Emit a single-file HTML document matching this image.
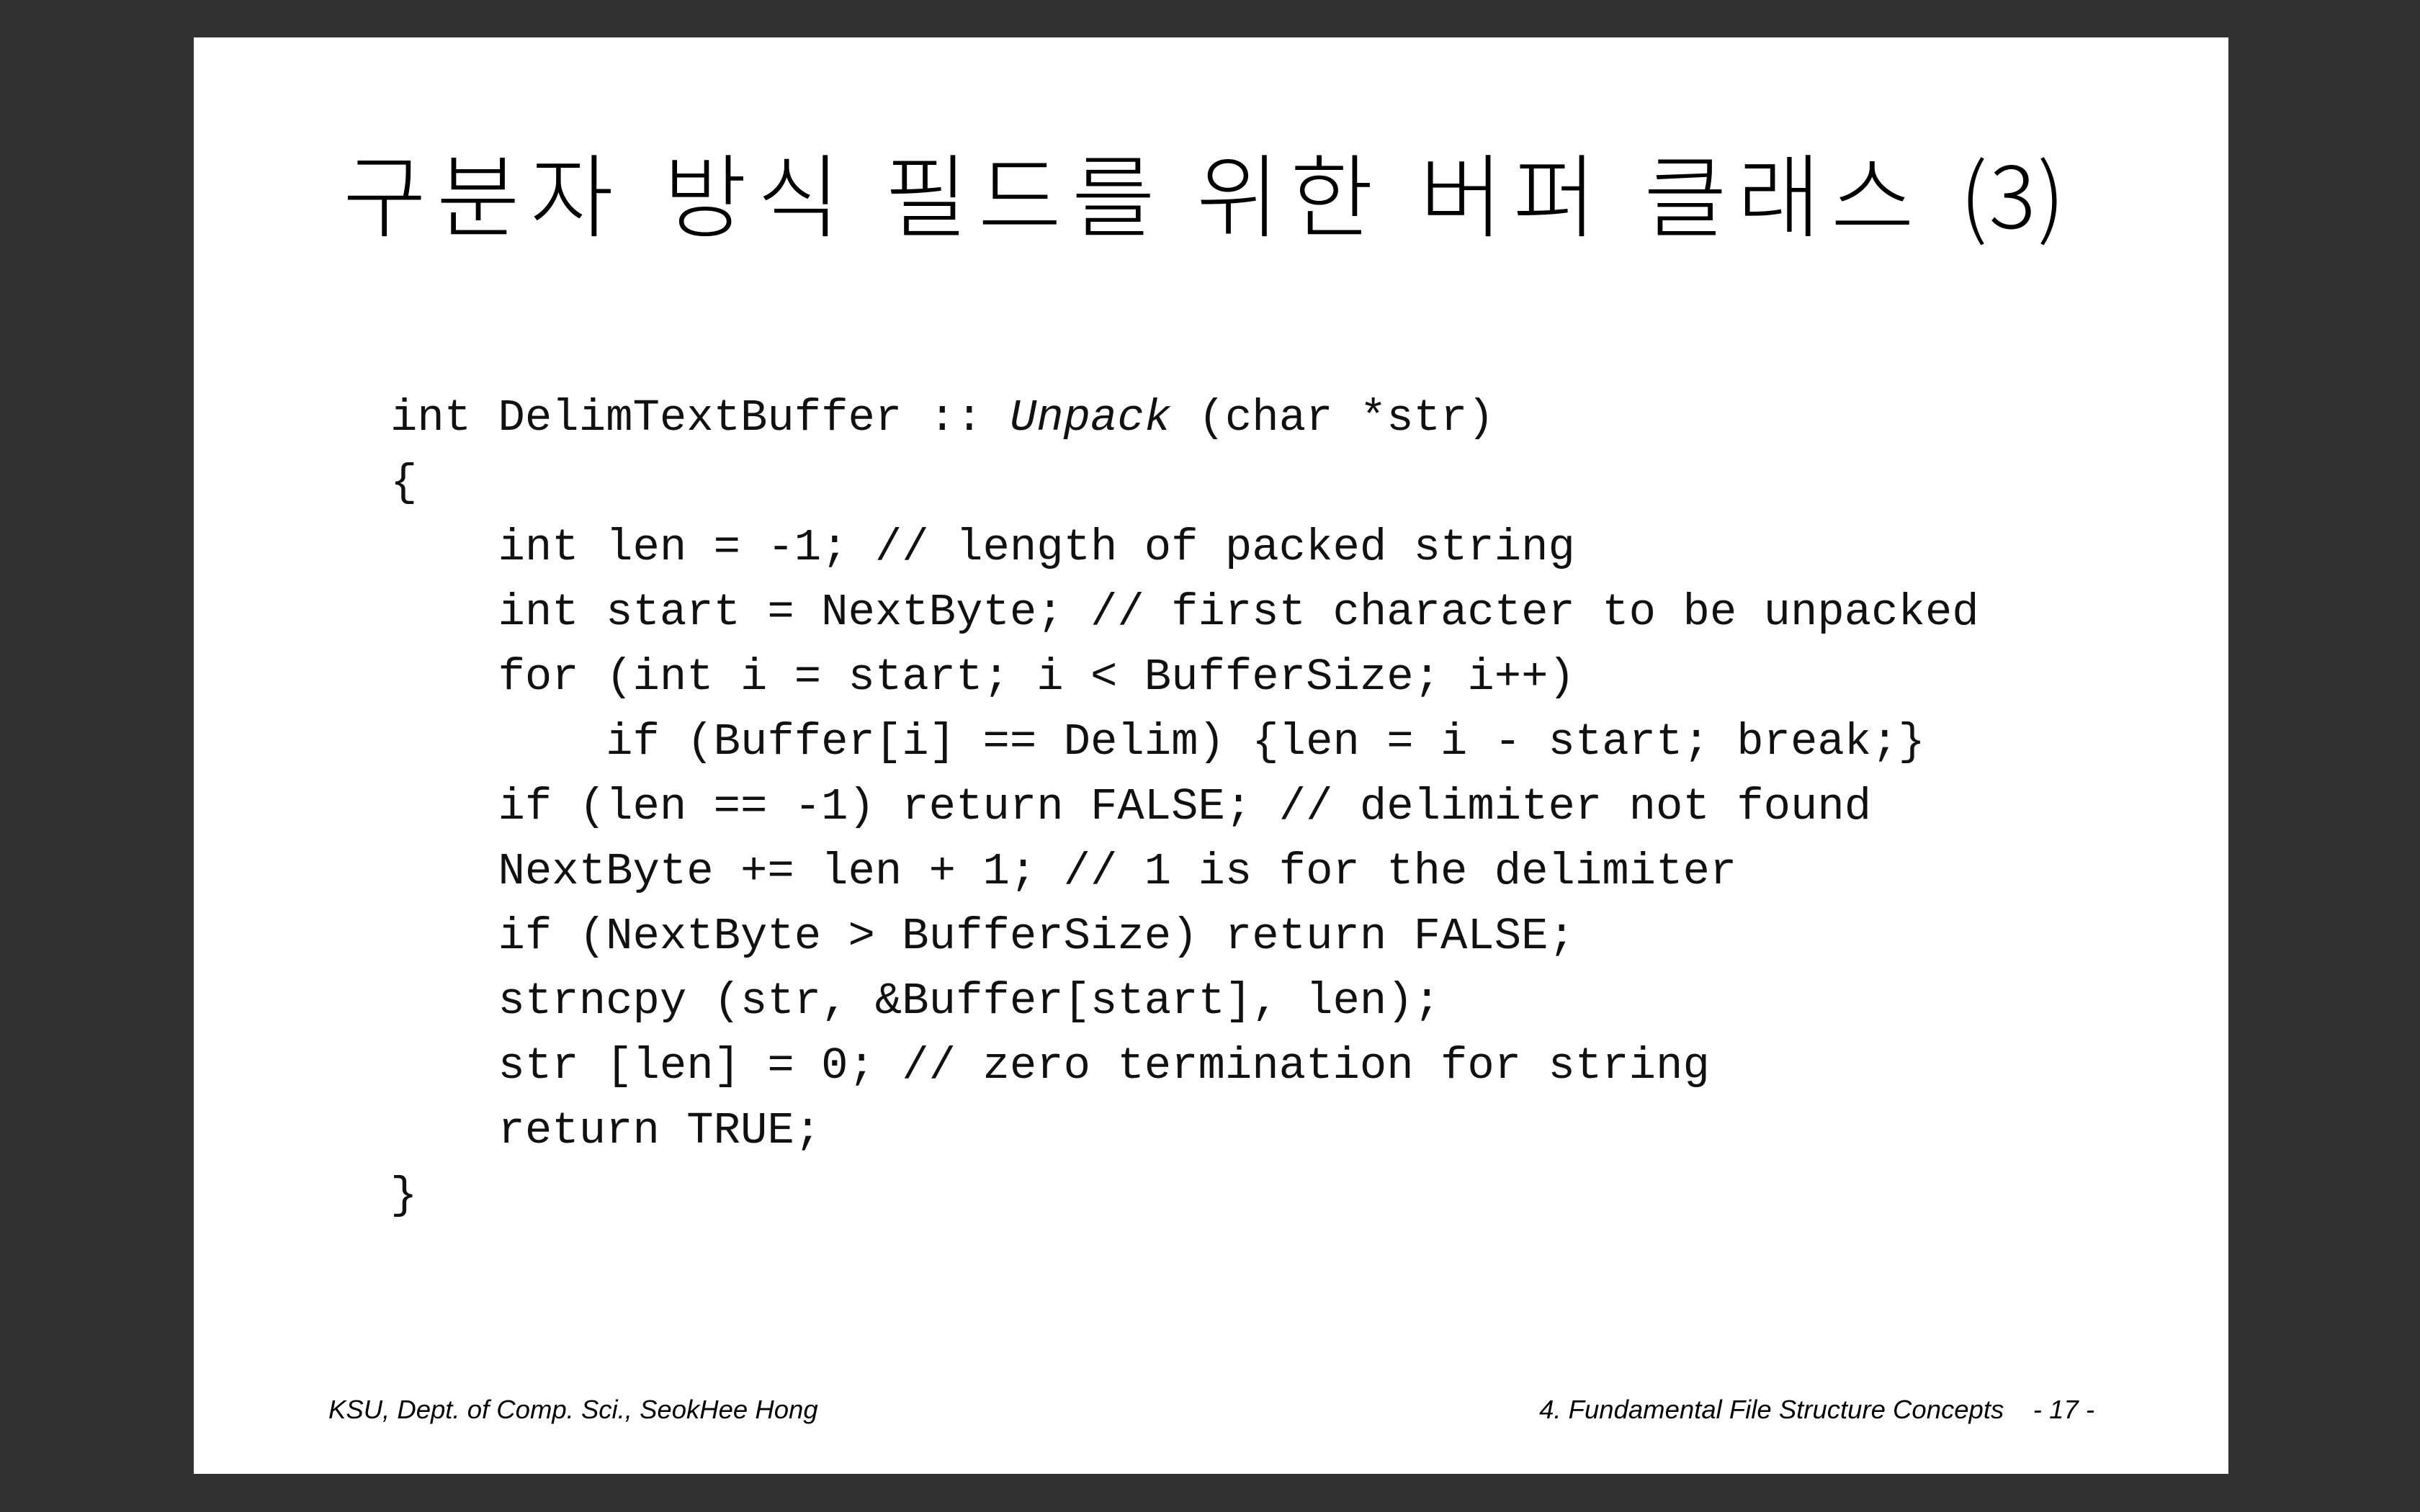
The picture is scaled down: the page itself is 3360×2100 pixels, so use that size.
<!DOCTYPE html>
<html><head><meta charset="utf-8"><style>
html,body{margin:0;padding:0;}
body{width:3360px;height:2100px;background:#323232;position:relative;overflow:hidden;}
.slide{position:absolute;left:269px;top:52px;width:2825px;height:1995px;background:#fff;}
.t{position:absolute;top:203px;font-family:"Noto Sans CJK KR","NanumGothic",sans-serif;font-weight:300;font-size:126px;line-height:124px;letter-spacing:14px;color:#000;white-space:nowrap;}
.t.p{font-family:"Noto Sans CJK KR",sans-serif;font-weight:300;font-size:122px;letter-spacing:2px;}
.code{position:absolute;left:542px;top:536px;font-family:"Liberation Mono",monospace;font-size:62.3px;line-height:90px;color:#111;white-space:pre;margin:0;}
.f{position:absolute;top:1938px;font-family:"Liberation Sans",sans-serif;font-style:italic;font-size:36.5px;line-height:40px;color:#000;white-space:nowrap;}
</style></head><body>
<div class="slide"></div>
<div class="t" style="left:476px">구분자</div>
<div class="t" style="left:921px">방식</div>
<div class="t" style="left:1228px">필드를</div>
<div class="t" style="left:1661px">위한</div>
<div class="t" style="left:1971px">버퍼</div>
<div class="t" style="left:2282px">클래스</div>
<div class="t p" style="left:2721px;top:203px">(3)</div>
<pre class="code">int DelimTextBuffer :: <i>Unpack</i> (char *str)
{
    int len = -1; // length of packed string
    int start = NextByte; // first character to be unpacked
    for (int i = start; i &lt; BufferSize; i++)
        if (Buffer[i] == Delim) {len = i - start; break;}
    if (len == -1) return FALSE; // delimiter not found
    NextByte += len + 1; // 1 is for the delimiter
    if (NextByte &gt; BufferSize) return FALSE;
    strncpy (str, &amp;Buffer[start], len);
    str [len] = 0; // zero termination for string
    return TRUE;
}</pre>
<div class="f" style="left:456px">KSU, Dept. of Comp. Sci., SeokHee Hong</div>
<div class="f" style="right:452px">4. Fundamental File Structure Concepts &nbsp;&nbsp;&nbsp;- 17 -</div>
</body></html>
